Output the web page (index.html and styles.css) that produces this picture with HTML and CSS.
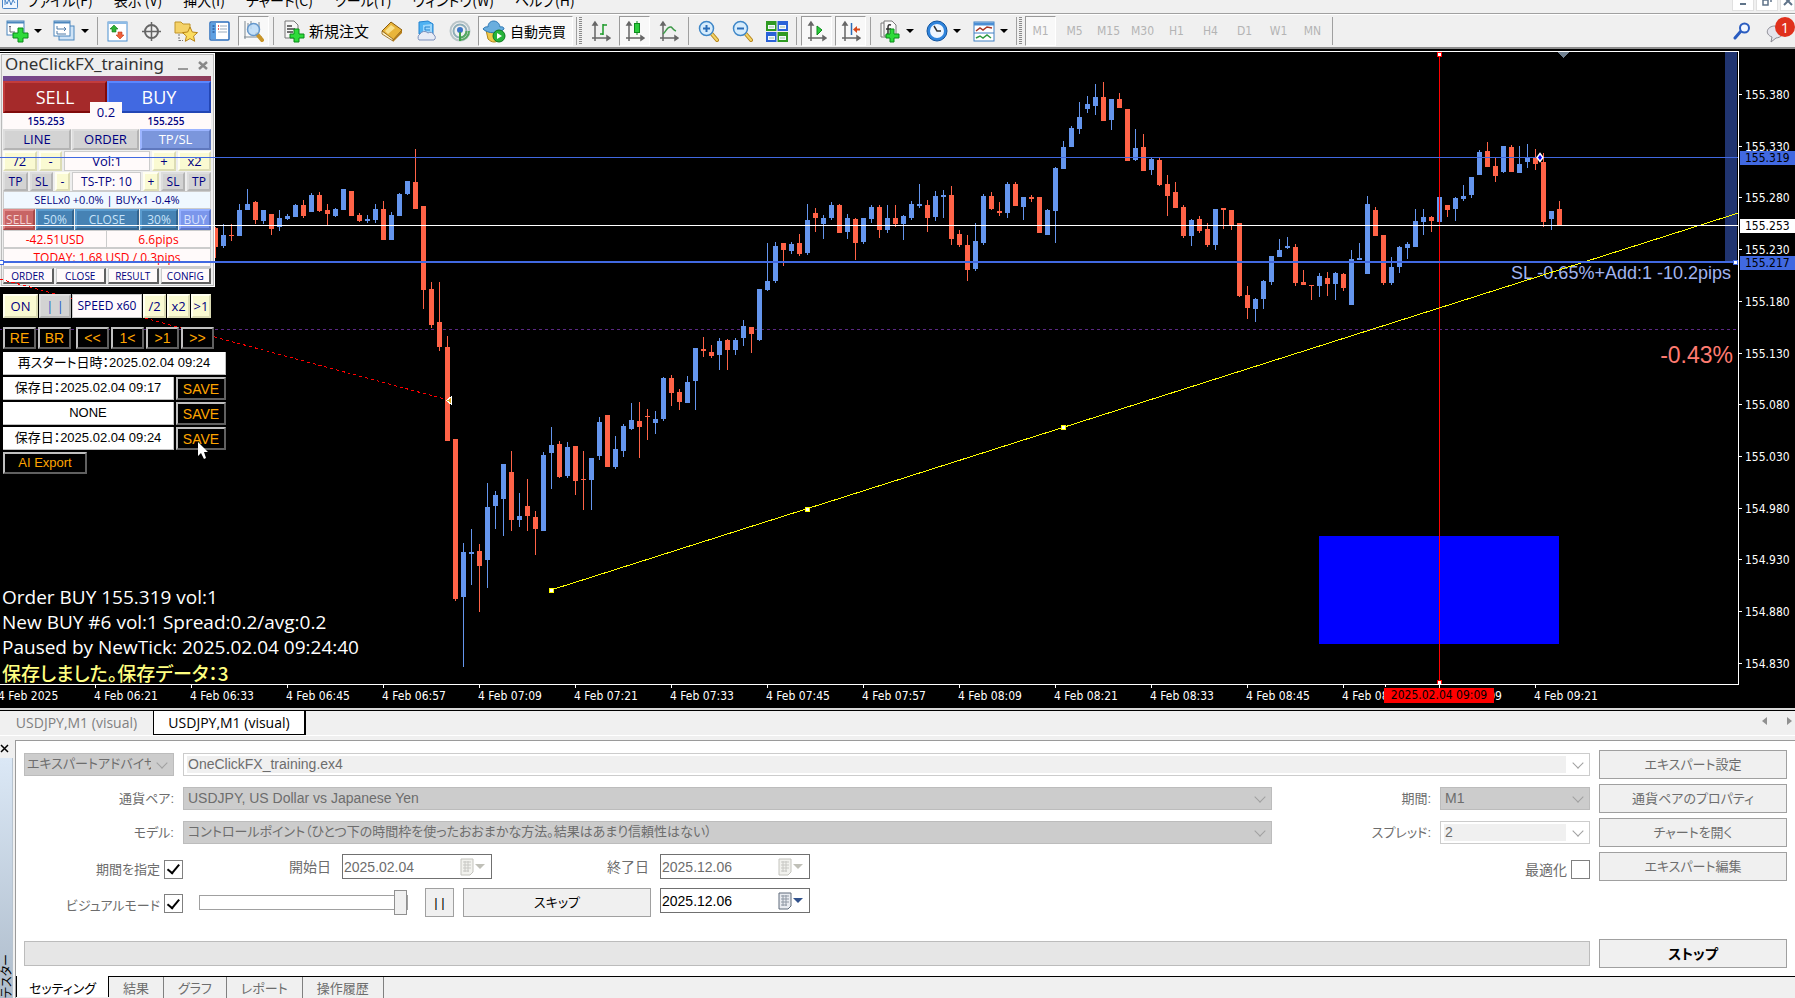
FILE: index.html
```html
<!DOCTYPE html>
<html lang="ja">
<head>
<meta charset="utf-8">
<title>USDJPY,M1 (visual)</title>
<link rel="stylesheet" href="styles.css">
</head>
<body>
<header class="menubar">
  <svg class="app-icon" width="16" height="16" viewBox="0 0 16 16"><rect x=".5" y=".5" width="15" height="15" rx="1" fill="#eef6ff" stroke="#4a86c8"/><path d="M3 12V7l2 4 2-5 2 6 2-5 2 3" fill="none" stroke="#4a86c8"/></svg>
  <nav class="menu">
    <button>ファイル(F)</button><button>表示 (V)</button><button>挿入(I)</button><button>チャート(C)</button><button>ツール(T)</button><button>ウィンドウ(W)</button><button>ヘルプ(H)</button>
  </nav>
  <div class="win-buttons">
    <button aria-label="最小化"><svg width="10" height="10" viewBox="0 0 10 10"><path d="M2 8h6" stroke="#5f7389" stroke-width="2"/></svg></button>
    <button aria-label="元に戻す"><svg width="10" height="10" viewBox="0 0 10 10"><path d="M1 4h5v5H1zM3 1h6v5" fill="none" stroke="#5f7389" stroke-width="1.5"/></svg></button>
    <button aria-label="閉じる"><svg width="10" height="10" viewBox="0 0 10 10"><path d="M1 1l8 8M9 1L1 9" stroke="#5f7389" stroke-width="2"/></svg></button>
  </div>
</header>

<div class="toolbar">
  <button class="tool drop" aria-label="新規チャート">
    <svg width="23" height="23" viewBox="0 0 23 23"><rect x="1" y="1" width="17" height="14" fill="#fff" stroke="#4b86bd"/><path d="M1 2.500h17" stroke="#4b86bd" stroke-width="2"/><path d="M4 6v6h5M4 6l-1 1M4 6l1 1" fill="none" stroke="#667"/><path d="M12 8h5v5h5v5h-5v4h-5v-4H7v-5h5z" fill="#2edb3a" stroke="#0a8a1a"/></svg><i class="caret"></i>
  </button>
  <button class="tool drop" aria-label="プロファイル">
    <svg width="23" height="23" viewBox="0 0 23 23"><rect x="6" y="6" width="15" height="14" fill="#cfe3f6" stroke="#4b86bd"/><rect x="1" y="1" width="16" height="15" fill="#fff" stroke="#4b86bd"/><path d="M1 2.500h16" stroke="#4b86bd" stroke-width="2"/><path d="M4 6v3h9M4 11v3h9M11 7l2 2-2 2" fill="none" stroke="#4f7ba6"/></svg><i class="caret"></i>
  </button>
  <span class="sep"></span>
  <button class="tool" aria-label="気配値表示"><svg width="21" height="21" viewBox="0 0 21 21"><rect x="1" y="1" width="19" height="19" fill="#fff" stroke="#4b8fd0"/><path d="M1 2h19" stroke="#8fbce6" stroke-width="2"/><path d="M7 4l4 4H9v3H5V8H3z" fill="#2eb135" stroke="#127a1a" stroke-width=".6"/><path d="M13 18l4-4h-2v-3h-4v3H9z" fill="#f0603a" stroke="#c03a18" stroke-width=".6"/></svg></button>
  <button class="tool" aria-label="データウィンドウ"><svg width="21" height="21" viewBox="0 0 21 21"><circle cx="10.500" cy="10.500" r="6.500" fill="none" stroke="#666" stroke-width="2"/><path d="M10.500 1v19M1 10.500h19" stroke="#666" stroke-width="1.500"/></svg></button>
  <button class="tool" aria-label="ナビゲーター"><svg width="24" height="22" viewBox="0 0 24 22"><path d="M1 2h6l2 2h7v9H1z" fill="#f5d268" stroke="#c09428"/><path d="M5 14v7M5 20.500h4" stroke="#777" stroke-dasharray="2 1"/><path d="M16 7l2.300 5 5.200.6-3.900 3.500 1.100 5.200-4.700-2.700-4.700 2.700 1.100-5.200-3.900-3.500 5.200-.6z" fill="#fbdc5e" stroke="#b98518"/></svg></button>
  <button class="tool" aria-label="ターミナル"><svg width="21" height="21" viewBox="0 0 21 21"><rect x="1" y="1" width="19" height="18" rx="1" fill="#fff" stroke="#2c6fbd" stroke-width="1.500"/><rect x="2" y="2" width="5" height="16" fill="#5ea0e2"/><path d="M3.500 5h2M3.500 8h2M3.500 11h2" stroke="#123a7a"/><path d="M9 5h1M9 8h1" stroke="#e02020" stroke-width="1.500"/><path d="M11 5h7M11 8h7M9 11h9" stroke="#9ab"/></svg></button>
  <button class="tool pressed" aria-label="ストラテジーテスター"><svg width="21" height="23" viewBox="0 0 21 23"><path d="M2 1v18M1 17h18M5 3v9M8 1v8M16 2v9" stroke="#7d8890" fill="none"/><path d="M14 14l5 6" stroke="#c99528" stroke-width="4" stroke-linecap="round"/><circle cx="10.500" cy="9.500" r="6" fill="#bcdcf8" fill-opacity=".85" stroke="#6698cc" stroke-width="1.500"/></svg></button>
  <span class="sep"></span>
  <button class="tool text order"><svg width="22" height="23" viewBox="0 0 22 23"><path d="M2 1h9l4 4v13H2z" fill="#f6f6f6" stroke="#777"/><path d="M4 6h5M4 9h8M4 12h6" stroke="#444" stroke-width="1.500"/><path d="M11 9h5v5h5v4h-5v4h-5v-4H7v-4h4z" fill="#2edb3a" stroke="#0a8a1a"/></svg>新規注文</button>
  <button class="tool" aria-label="MetaEditor"><svg width="22" height="21" viewBox="0 0 22 21"><path d="M1 10L10 1l11 8-9 10z" fill="#e9b53a" stroke="#8a5c0c"/><path d="M1 10v3l11 7v-2z" fill="#fff3c8" stroke="#8a5c0c" stroke-width=".8"/><path d="M4 10l6-6 4 3-7 6z" fill="#f9e08a"/><path d="M12 19v2l9-9V9z" fill="#b47c18"/></svg></button>
  <button class="tool" aria-label="VPS"><svg width="22" height="22" viewBox="0 0 22 22"><path d="M4 2l9-1 5 3v10H4z" fill="#4fb2f2" stroke="#2383d0"/><path d="M8 5l9-1v9H8z" fill="#9bd6fb"/><path d="M10 7h5M10 7v3h5" stroke="#2383d0" fill="none"/><path d="M4 20a4 4 0 0 1 1-6 5 5 0 0 1 8-1 4 4 0 0 1 6 2 3 3 0 0 1 0 5z" fill="#e8ecf6" stroke="#7c90bc"/></svg></button>
  <button class="tool" aria-label="シグナル"><svg width="22" height="22" viewBox="0 0 22 22"><g fill="none"><circle cx="11" cy="11" r="9.500" stroke="#b9c5c9" stroke-width="2"/><circle cx="11" cy="11" r="6.500" stroke="#8faeb8" stroke-width="2"/><path d="M11 20a9 9 0 0 0 9-9M11 17.500a6.500 6.500 0 0 0 6.500-6.500" stroke="#54a860" stroke-width="2"/></g><circle cx="11" cy="10" r="3" fill="#3c76c8"/><path d="M11 12v9" stroke="#3da04a" stroke-width="2"/></svg></button>
  <button class="tool text pressed auto"><svg width="24" height="23" viewBox="0 0 24 23"><path d="M4 10l2 9c4 4 8 4 12 0l2-9z" fill="#f0c94a" stroke="#b08518"/><path d="M1 9c2-3 5-2 5-2 0-8 11-8 12 0 0 0 4-1 4 2-5 5-16 5-21 0z" fill="#6aaede" stroke="#2a76b4"/><circle cx="17" cy="16" r="6" fill="#27b43a" stroke="#0d7a1e"/><path d="M15 13l5 3-5 3z" fill="#fff"/></svg>自動売買</button>
  <span class="edge"></span>
  <button class="tool" aria-label="バーチャート"><svg width="20" height="22" viewBox="0 0 20 22"><path class="ax" d="M4 21V3M1 18h18M4 2L2 5h4zM19 18l-3-2v4z"/><path d="M12 4v11M12 5h4M9 14h3" stroke="#1d9a2a" stroke-width="1.500" fill="none"/></svg></button>
  <button class="tool pressed" aria-label="ローソク足"><svg width="20" height="22" viewBox="0 0 20 22"><path class="ax" d="M4 21V3M1 18h18M4 2L2 5h4zM19 18l-3-2v4z"/><path d="M12 1v14" stroke="#118a1e"/><rect x="9.500" y="3.500" width="5" height="9" fill="#2bcc3c" stroke="#0c8a1c"/></svg></button>
  <button class="tool" aria-label="ラインチャート"><svg width="20" height="22" viewBox="0 0 20 22"><path class="ax" d="M4 21V3M1 18h18M4 2L2 5h4zM19 18l-3-2v4z"/><path d="M4 14c3-2 4-8 8-7 2 1 2 3 5 4" stroke="#3f9a4a" stroke-width="1.500" fill="none"/></svg></button>
  <span class="sep"></span>
  <button class="tool" aria-label="拡大"><svg width="21" height="22" viewBox="0 0 21 22"><path d="M13 13l6 7" stroke="#b8861c" stroke-width="4" stroke-linecap="round"/><path d="M13 13l6 7" stroke="#f3d468" stroke-width="2" stroke-linecap="round"/><circle cx="8.500" cy="8.500" r="7" fill="#d6ecfc" stroke="#3f87c8" stroke-width="1.500"/><path d="M5 8.500h7M8.500 5v7" stroke="#2a6db8" stroke-width="2"/></svg></button>
  <button class="tool" aria-label="縮小"><svg width="21" height="22" viewBox="0 0 21 22"><path d="M13 13l6 7" stroke="#b8861c" stroke-width="4" stroke-linecap="round"/><path d="M13 13l6 7" stroke="#f3d468" stroke-width="2" stroke-linecap="round"/><circle cx="8.500" cy="8.500" r="7" fill="#d6ecfc" stroke="#3f87c8" stroke-width="1.500"/><path d="M5 8.500h7" stroke="#2a6db8" stroke-width="2"/></svg></button>
  <button class="tool" aria-label="並べて表示"><svg width="22" height="21" viewBox="0 0 22 21"><path d="M0 0h10.500v10H0zM11.500 11H22v10H11.500z" fill="#2f9a22"/><path d="M11.500 0H22v10H11.500zM0 11h10.500v10H0z" fill="#2a62d8"/><path d="M2 4h7v4H2zM13 4h7v4h-7zM2 15h7v4H2zM13 15h7v4h-7z" fill="#f4f8ff"/><path d="M3 6h5M14 6h5M3 17h5M14 17h5" stroke="#9cc0a0"/></svg></button>
  <span class="sep"></span>
  <button class="tool pressed" aria-label="自動スクロール"><svg width="20" height="22" viewBox="0 0 20 22"><path class="ax" d="M4 21V3M1 18h18M4 2L2 5h4zM19 18l-3-2v4z"/><path d="M10 6l5 4-5 5z" fill="#2bcc3c" stroke="#0c8a1c"/></svg></button>
  <button class="tool pressed" aria-label="チャートシフト"><svg width="20" height="22" viewBox="0 0 20 22"><path class="ax" d="M4 21V3M1 18h18M4 2L2 5h4zM19 18l-3-2v4z"/><path d="M10.500 3v12" stroke="#2a6db8" stroke-width="1.500"/><path d="M12 9.500l4-3.500v2.500h3v2h-3V13z" fill="#d8481c"/></svg></button>
  <span class="sep"></span>
  <button class="tool drop" aria-label="インディケーター"><svg width="22" height="23" viewBox="0 0 22 23"><path d="M5 3H2v14h9M5 1h8l4 4v11H5z" fill="#fafafa" stroke="#777"/><path d="M12 5c-3-1-3 1-3 3v5c0 2-1 2-2 2M7 9h5" fill="none" stroke="#333" stroke-width="1.500"/><path d="M11 9h4v5h5v4h-5v4h-4v-4H7v-4h4z" fill="#2edb3a" stroke="#0a8a1a"/></svg><i class="caret"></i></button>
  <button class="tool drop" aria-label="時間足"><svg width="22" height="22" viewBox="0 0 22 22"><circle cx="11" cy="11" r="10" fill="#2f84dc" stroke="#11549f"/><circle cx="11" cy="11" r="7" fill="#eef6ff"/><path d="M8 6l3 5h4" fill="none" stroke="#333" stroke-width="1.500"/></svg><i class="caret"></i></button>
  <button class="tool drop" aria-label="定型チャート"><svg width="22" height="21" viewBox="0 0 22 21"><rect x="1" y="1" width="20" height="19" fill="#fff" stroke="#3f80c4"/><path d="M1 3h20" stroke="#4a8ed4" stroke-width="3"/><path d="M3 10l4-3 3 2 4-3 5 1" fill="none" stroke="#a83424" stroke-width="1.500"/><path d="M1 12h20" stroke="#3f80c4"/><path d="M3 17l4-2 3 2 4-3 4 3" fill="none" stroke="#2f9a3f" stroke-width="1.500"/></svg><i class="caret"></i></button>
  <span class="edge"></span>
  <button class="tool tf pressed" disabled>M1</button><button class="tool tf" disabled>M5</button><button class="tool tf" disabled>M15</button><button class="tool tf" disabled>M30</button><button class="tool tf" disabled>H1</button><button class="tool tf" disabled>H4</button><button class="tool tf" disabled>D1</button><button class="tool tf" disabled>W1</button><button class="tool tf" disabled>MN</button>
  <span class="sep"></span>
  <div class="tool-right">
    <button class="tool" aria-label="検索"><svg width="18" height="18" viewBox="0 0 18 18"><path d="M2 16l6-7" stroke="#2a5cc0" stroke-width="3" stroke-linecap="round"/><circle cx="11.500" cy="6" r="4.500" fill="#f0f6ff" stroke="#2a5cc0" stroke-width="2"/></svg></button>
    <button class="chat" aria-label="通知"><svg width="18" height="18" viewBox="0 0 18 18"><path d="M9 1c11 0 11 11 1 12l-5 4 1-5C-2 9 1 1 9 1z" fill="#e4e4ec" stroke="#8a8a92"/></svg><span class="badge">1</span></button>
  </div>
</div>

<main class="chart">
  <section class="plot">
    <svg class="layer" id="candles" aria-label="USDJPY M1"></svg>
    <div class="zone"></div>
    <div class="msgs"><p>Order BUY 155.319 vol:1</p><p>New BUY #6 vol:1 Spread:0.2/avg:0.2</p><p>Paused by NewTick: 2025.02.04 09:24:40</p><p class="saved">保存しました。保存データ：3</p></div>
    <p class="sl-text">SL -0.65%+Add:1 -10.2pips</p>
    <p class="pct">-0.43%</p>

    <div class="trade">
      <div class="trade-title"><span>OneClickFX_training</span><button aria-label="最小化"><svg width="12" height="12" viewBox="0 0 12 12"><path d="M1 10h10" stroke="#999" stroke-width="2"/></svg></button><button aria-label="閉じる"><svg width="12" height="12" viewBox="0 0 12 12"><path d="M2 3l8 7M10 3L2 10" stroke="#888" stroke-width="2.500"/></svg></button></div>
      <div class="stripe"></div>
      <div class="deal"><button class="b sell">SELL</button><button class="b buy">BUY</button><span class="spread">0.2</span></div>
      <div class="quotes"><span>155.253</span><span>155.255</span></div>
      <div class="r r-mode"><button class="b grey">LINE</button><button class="b grey">ORDER</button><button class="b on">TP/SL</button></div>
      <div class="r r-vol"><button class="b cream">/2</button><button class="b cream">-</button><output class="cell">Vol:1</output><button class="b cream">+</button><button class="b cream">x2</button></div>
      <div class="r r-ts"><button class="b grey">TP</button><button class="b grey">SL</button><button class="b cream">-</button><output class="cell">TS-TP: 10</output><button class="b cream">+</button><button class="b grey">SL</button><button class="b grey">TP</button></div>
      <div class="info alice">SELLx0 +0.0% | BUYx1 -0.4%</div>
      <div class="r r-close"><button class="b lsell">SELL</button><button class="b steel">50%</button><button class="b steel">CLOSE</button><button class="b steel">30%</button><button class="b lbuy">BUY</button></div>
      <div class="money"><span>-42.51USD</span><span>6.6pips</span></div>
      <div class="info today">TODAY: 1.68 USD / 0.3pips</div>
      <div class="r r-tabs"><button class="b snow">ORDER</button><button class="b snow">CLOSE</button><button class="b snow">RESULT</button><button class="b snow">CONFIG</button></div>
    </div>

    <div class="control">
      <div class="r r-speed"><button class="b cream">ON</button><button class="b grey pz">| |</button><output class="cell">SPEED x60</output><button class="b cream">/2</button><button class="b cream">x2</button><button class="b cream">&gt;1</button></div>
      <div class="r r-step"><button class="k">RE</button><button class="k">BR</button><button class="k k-gap">&lt;&lt;</button><button class="k">1&lt;</button><button class="k">&gt;1</button><button class="k">&gt;&gt;</button></div>
      <div class="slots">
        <span class="slot wide">再スタート日時：2025.02.04 09:24</span>
        <span class="slot">保存日：2025.02.04 09:17</span><button class="k">SAVE</button>
        <span class="slot">NONE</span><button class="k">SAVE</button>
        <span class="slot">保存日：2025.02.04 09:24</span><button class="k">SAVE</button>
      </div>
      <button class="k export">AI Export</button>
    </div>
    <svg class="layer front" id="lines"></svg>
  </section>
  <aside class="prices" id="prices"></aside>
  <footer class="times" id="times"></footer>
</main>

<nav class="chart-tabs">
  <button>USDJPY,M1 (visual)</button><button class="active">USDJPY,M1 (visual)</button>
  <span class="arrows"><i class="al"></i><i class="ar"></i></span>
</nav>

<section class="tester">
  <div class="rail"><button class="rail-close" aria-label="閉じる"><svg width="9" height="9" viewBox="0 0 9 9"><path d="M1 1l7 7M8 1L1 8" stroke="#000" stroke-width="1.500"/></svg></button><div class="rail-body"><span>テスター</span></div></div>
  <div class="pane">
    <form class="form">
      <div class="line">
        <span class="pick filled w-type"><select class="jp" disabled aria-label="種類"><option>エキスパートアドバイザ</option></select></span>
        <span class="pick open grow"><select disabled aria-label="エキスパート"><option>OneClickFX_training.ex4</option></select></span>
      </div>
      <button class="btn" type="button" disabled>エキスパート設定</button>
      <div class="line">
        <label class="lab" for="sym">通貨ペア:</label><span class="pick filled grow"><select id="sym" disabled><option>USDJPY, US Dollar vs Japanese Yen</option></select></span>
        <label class="lab rt" for="per">期間:</label><span class="pick filled w-small"><select id="per" disabled><option>M1</option></select></span>
      </div>
      <button class="btn" type="button" disabled>通貨ペアのプロパティ</button>
      <div class="line">
        <label class="lab" for="mod">モデル:</label><span class="pick filled grow"><select class="jp" id="mod" disabled><option>コントロールポイント（ひとつ下の時間枠を使ったおおまかな方法。結果はあまり信頼性はない）</option></select></span>
        <label class="lab rt" for="spr">スプレッド:</label><span class="pick open w-small"><select id="spr" disabled><option>2</option></select></span>
      </div>
      <button class="btn" type="button" disabled>チャートを開く</button>
      <div class="line">
        <label class="chk-lab" for="use">期間を指定</label><input class="chk" type="checkbox" id="use" checked>
        <label class="d-lab first" for="from">開始日</label><span class="date off"><input id="from" value="2025.02.04" disabled><svg width="26" height="18" viewBox="0 0 26 18"><path d="M2 1h12v13l-3 3H2z" fill="#f2f2ee" stroke="#c4c4be"/><path d="M4 4h8M4 7h8M4 10h8M4 13h6M6 3v11M9 3v11" stroke="#c8c8c4"/><path d="M16 6h10l-5 5z" fill="#c0c0b8"/></svg></span>
        <label class="d-lab" for="to">終了日</label><span class="date off"><input id="to" value="2025.12.06" disabled><svg width="26" height="18" viewBox="0 0 26 18"><path d="M2 1h12v13l-3 3H2z" fill="#f2f2ee" stroke="#c4c4be"/><path d="M4 4h8M4 7h8M4 10h8M4 13h6M6 3v11M9 3v11" stroke="#c8c8c4"/><path d="M16 6h10l-5 5z" fill="#c0c0b8"/></svg></span>
        <span class="opt"><label for="opt">最適化</label><input class="chk" type="checkbox" id="opt"></span>
      </div>
      <button class="btn" type="button" disabled>エキスパート編集</button>
      <div class="line visual">
        <label class="chk-lab" for="vis">ビジュアルモード</label><input class="chk" type="checkbox" id="vis" checked>
        <input class="speed" type="range" min="0" max="100" value="100" aria-label="速度">
        <button class="btn live pause" type="button">| |</button><button class="btn live skip" type="button">スキップ</button>
        <span class="date"><input value="2025.12.06" aria-label="スキップ先"><svg width="26" height="18" viewBox="0 0 26 18"><path d="M2 1h12v13l-3 3H2z" fill="#e8ebf0" stroke="#5f6a7a"/><path d="M4 4h8M4 7h8M4 10h8M4 13h6M6 3v11M9 3v11" stroke="#8f98a4"/><path d="M16 6h10l-5 5z" fill="#31528c"/></svg></span>
      </div>
      <span></span>
      <div class="progress" role="progressbar" aria-label="進捗"></div>
      <button class="btn live stop" type="button">ストップ</button>
    </form>
    <nav class="pane-tabs"><button class="active">セッティング</button><button>結果</button><button>グラフ</button><button>レポート</button><button>操作履歴</button></nav>
  </div>
</section>
<script src="chart.js"></script>
</body>
</html>
```

FILE: styles.css
```css
:root {
  --ui: "Open Sans", "Noto Sans", "Noto Sans CJK JP", sans-serif;
  --axis: "DejaVu Sans Condensed", "Noto Sans", sans-serif;
  --gothic: "Liberation Sans", "Noto Sans CJK JP", sans-serif;
  --face: #f0f0f0;
}
* { box-sizing: border-box; }
body { margin: 0; min-height: 100vh; display: flex; flex-direction: column; overflow: hidden; background: var(--face); font: 14px/20px var(--ui); color: #000; }
button { font: inherit; color: inherit; border: 0; padding: 0; background: none; white-space: nowrap; }
p { margin: 0; }

/* menu */
.menubar { display: flex; align-items: flex-end; height: 14px; border-bottom: 1px solid #a0a0a0; overflow: hidden; }
.app-icon { margin: 0 9px 4px 2px; }
.menu { display: flex; gap: 21px; padding-bottom: 3px; font: 14px/20px "Noto Sans CJK JP", sans-serif; font-feature-settings: "palt"; }
.menu button { height: 20px; }
.win-buttons { display: flex; gap: 2px; margin-left: auto; height: 24px; overflow: hidden; margin-bottom: 2px; }
.win-buttons button { width: 22px; background: #fff; border: 1px solid #e0e0e0; display: grid; place-items: end center; padding-bottom: 4px; }
.win-buttons button:last-child { width: 15px; }

/* toolbar */
.toolbar { display: flex; align-items: center; gap: 3px; height: 35px; padding: 1px 0 1px 2px; border-top: 1px solid #fff; border-bottom: 2px solid #8c8c8c; overflow: hidden; }
.tool { flex: none; width: 31px; height: 30px; display: grid; place-items: center; }
.tool svg { display: block; }
.tool.drop { width: 44px; display: flex; align-items: center; gap: 5px; padding-left: 4px; }
.caret { border: 4px solid transparent; border-top-color: #000; border-bottom: 0; }
.sep { flex: none; width: 1px; height: 28px; margin: 0 1px; background: #a0a0a0; }
.edge { flex: none; width: 6px; height: 28px; border-left: 1px solid #a0a0a0; background: repeating-linear-gradient(#8a8a8a 0 1px, transparent 1px 2px) right / 3px 100% no-repeat; }
.pressed { background: #f8f8f8; border: 1px solid #fff; border-top-color: #9a9a9a; border-left-color: #9a9a9a; }
.tool.text { display: flex; align-items: center; width: 95px; padding-left: 5px; gap: 4px; font: 15px/22px "Noto Sans CJK JP", sans-serif; }
.tool.auto { padding-left: 3px; gap: 4px; font-size: 14px; }
.tool.tf { font: 12px/16px var(--axis); color: #b4b4b4; }
.ax { fill: #666; stroke: #666; stroke-width: 1.500; }
.tool-right { margin-left: auto; display: flex; align-items: center; gap: 8px; }
.chat { width: 30px; height: 30px; position: relative; display: grid; place-items: end start; padding: 0 0 3px 1px; }
.badge { position: absolute; right: 0; top: 1px; width: 20px; height: 20px; border-radius: 10px; background: #e0301c; color: #fff; font: 15px/20px var(--ui); text-align: center; }

/* chart */
.chart { display: grid; grid-template-columns: minmax(0, 1fr) 56px; background: #000; padding-top: 2px; color: #fff; font: 12px/14px var(--axis); border-bottom: 2px solid #d8d8d8; overflow: hidden; }
.plot { position: relative; height: 634px; border: solid #fff; border-width: 1px 1px 1px 0; overflow: hidden; }
.layer { position: absolute; left: 0; top: 0; width: 100%; height: 100%; shape-rendering: crispEdges; }
.front { pointer-events: none; }
.smooth { shape-rendering: auto; }
.zone { position: absolute; right: 1px; top: 0; width: 12px; height: 210px; background: #203470; }
.prices { position: relative; overflow: hidden; }
.prices span { position: absolute; left: 0; width: 100%; padding-left: 6px; height: 14px; }
.prices span::before { content: ""; position: absolute; left: 0; top: 6px; width: 3px; height: 1px; background: #fff; }
.prices .tag { left: 1px; padding-left: 5px; color: #000; background: #4169e1; line-height: 15px; }
.prices .tag::before { display: none; }
.prices .tag.bid { background: #fff; }
.times { position: relative; height: 23px; grid-column: 1 / -1; overflow: hidden; }
.times span { position: absolute; top: 4px; white-space: nowrap; }
.times span::before { content: ""; position: absolute; left: 1px; top: -4px; width: 1px; height: 3px; background: #fff; }
.times .tag { background: #f00; color: #000; width: 110px; text-align: center; line-height: 15px; top: 3px; }
.msgs { position: absolute; left: 2px; bottom: -1px; font: 19px/25px var(--ui); white-space: nowrap; }
.msgs .saved { color: #ffff80; font: 500 19px/25px "Noto Sans CJK JP", sans-serif; font-feature-settings: "palt"; }
.sl-text { position: absolute; right: 7px; top: 210px; font: 18px/22px var(--gothic); color: #a0b4f0; }
.pct { position: absolute; right: 5px; top: 289px; font: 23px/28px var(--gothic); color: #ff7b70; }

/* trade panel */
.trade { position: absolute; left: 0; top: 1px; width: 215px; padding: 0 3px 2px; background: #eee; border: solid #fff; border-width: 1px 1px 1px 0; outline: 1px solid #bbb; outline-offset: -2px; color: #000080; font: 13px/16px var(--ui); }
.trade-title { display: flex; align-items: center; height: 22px; padding: 0 2px; color: #333; font: 17px/20px "Noto Sans", var(--ui); gap: 8px; }
.trade-title span { flex: 1; height: 22px; }
.trade-title button { height: 12px; line-height: 0; }
.stripe { height: 5px; background: linear-gradient(90deg, #6e4690, #96466e 60%, #8c3c5a); }
.b { height: 100%; text-align: center; overflow: hidden; border: 2px solid; padding: 0; line-height: 1; display: grid; place-items: center; }
.deal { position: relative; display: grid; grid-template-columns: 1fr 1fr; height: 32px; font-size: 18px; color: #fff; }
.sell { background: #a52a2a; border-color: #c33c3c #800a0a #800a0a #c33c3c; }
.buy { background: #4169e1; border-color: #5a86ff #2346b4 #2346b4 #5a86ff; }
.spread { position: absolute; left: 50%; top: 21px; width: 32px; height: 26px; margin-left: -17px; background: #fffafa; color: #000080; font-size: 13px; line-height: 20px; text-align: center; }
.quotes { display: grid; grid-template-columns: 1fr 1fr; height: 16px; background: #fffafa; font: 600 10px/16px var(--ui); text-align: center; }
.quotes span:first-child { padding-right: 18px; }
.quotes span:last-child { padding-left: 14px; }
.r { display: grid; column-gap: 2px; }
.r-mode { grid-template-columns: 68px 67px 1fr; height: 21px; column-gap: 1px; }
.r-vol { grid-template-columns: 34px 23px 1fr 24px 33px; height: 20px; margin-top: 1px; }
.r-ts { grid-template-columns: 25px 23px 15px 1fr 16px 24px 24px; height: 19px; margin-top: 1px; font-size: 12px; }
.grey { background: #d3d3d3; border-color: #ddd #b4b4b4 #b4b4b4 #ddd; }
.on { background: #7b96dc; color: #fff; border-color: #9bb4ff #5f78be #5f78be #9bb4ff; }
.cream { background: #fafad2; border-color: #fffff0 #dcdcb4 #dcdcb4 #fffff0; }
.cell { background: #fffafa; border: 1px solid #ccc; display: grid; place-items: center; line-height: 1; white-space: nowrap; overflow: hidden; }
.info { height: 18px; line-height: 16px; text-align: center; background: #fffafa; border: 1px solid #ccc; white-space: nowrap; }
.alice { background: #f0f8ff; font-size: 11px; }
.r-close { grid-template-columns: 32px 38px 1fr 38px 32px; height: 21px; column-gap: 1px; }
.lsell { background: #c86464; color: #f4d0d0; border-color: #e08c8c #a84a4a #a84a4a #e08c8c; font-size: 12px; }
.steel { background: #4682b4; color: #c8e4fa; border-color: #5a9ccf #33648e #33648e #5a9ccf; font-size: 12px; }
.lbuy { background: #7b96eb; color: #d8e2ff; border-color: #94b0ff #5c76c8 #5c76c8 #94b0ff; font-size: 12px; }
.money { display: grid; grid-template-columns: 1fr 1fr; height: 18px; font-size: 12px; line-height: 17px; text-align: center; color: #f00; background: #fffafa; border: 1px solid #ccc; }
.money span:first-child { border-right: 1px solid #ccc; }
.today { color: #f00; font-size: 12px; height: 20px; line-height: 18px; border-bottom-width: 2px; }
.r-tabs { grid-template-columns: repeat(4, 1fr); height: 16px; font-size: 10px; }
.snow { background: #fffafa; border-width: 1px 2px 2px 1px; border-color: #ccc #606060 #606060 #ccc; }

/* replay controls */
.control { position: absolute; left: 3px; top: 242px; width: 224px; color: #000080; font: 12px/16px var(--ui); }
.r-speed { grid-template-columns: 35px 32px 70px 23px 23px 20px; height: 24px; column-gap: 1px; width: 208px; font-size: 13px; }
.r-speed .cell { font-size: 12px; }
.pz { color: #1e5ac8; }
.r-step { display: flex; gap: 2px; margin-top: 9px; height: 22px; }
.k { background: #000; color: #ffa500; border: 2px solid; border-color: #c0c0c0 #606060 #606060 #c0c0c0; font: 14px/16px var(--gothic); }
.r-step .k { width: 33px; }
.k-gap { margin-left: 3px; }
.slots { display: grid; grid-template-columns: 171px 50px; gap: 2px; grid-auto-rows: 23px; margin-top: 3px; }
.slot { background: #fff; color: #000; border: solid #c0c0c0; border-width: 0 1px 1px 0; text-align: center; font: 13px/22px var(--gothic); font-feature-settings: "palt"; white-space: nowrap; }
.wide { grid-column: 1 / -1; }
.export { display: block; width: 84px; height: 22px; margin-top: 2px; font-size: 13px; }

/* chart tabs */
.chart-tabs { display: flex; height: 26px; border-top: 1px solid #000; border-bottom: 1px solid #fff; font: 14px/24px var(--ui); color: #808080; }
.chart-tabs button { width: 153px; height: 24px; }
.chart-tabs .active { color: #000; background: #fff; border: solid #000; border-width: 0 2px 1px 1px; }
.arrows { margin-left: auto; display: flex; gap: 20px; padding: 6px 3px 0 0; }
.arrows i { height: 8px; border: solid transparent; border-width: 4px 0; }
.arrows .al { border-right: 5px solid #909090; }
.arrows .ar { border-left: 5px solid #909090; }

/* tester */
.tester { flex: 1; display: grid; grid-template-columns: 15px minmax(0, 1fr); }
.rail { display: flex; flex-direction: column; width: 13px; }
.rail-close { height: 22px; padding-top: 2px; display: flex; align-items: center; }
.rail-body { flex: 1; display: flex; flex-direction: column; justify-content: flex-end; background: linear-gradient(#dbe8f6, #aebccb); border-right: 1px solid #b8c4d0; overflow: hidden; }
.rail-body span { writing-mode: vertical-rl; text-orientation: sideways; transform: rotate(180deg); font: 12px/12px "Noto Sans CJK JP", sans-serif; font-feature-settings: "palt"; }
.pane { display: flex; flex-direction: column; margin-top: 4px; background: #fff; border: solid #9a9a9a; border-width: 1px 0 0 1px; }
.form { display: grid; grid-template-columns: minmax(0, 1fr) 188px; column-gap: 9px; row-gap: 5px; align-items: center; padding: 9px 8px 8px 8px; font: 14px/20px var(--gothic); font-feature-settings: "palt"; color: #6d6d6d; }
.line { display: flex; align-items: center; height: 29px; min-width: 0; }
.pick { position: relative; display: block; height: 23px; min-width: 0; border: 1px solid #bcbcbc; }
.pick::after { content: ""; position: absolute; right: 7px; top: 5px; width: 7px; height: 7px; border: solid #a0a0a0; border-width: 0 1px 1px 0; transform: rotate(45deg); }
.pick select { appearance: none; display: block; width: 100%; height: 21px; border: 0; padding: 0 24px 2px 4px; font: inherit; font-feature-settings: inherit; color: #6d6d6d; background: none; opacity: 1; }
.pick .jp { font-size: 13px; }
.filled { background: #ccc; }
.open { background: #fff; border-color: #ccc; }
.open select { background: linear-gradient(#f0f0f0, #f0f0f0) 3px 2px / calc(100% - 26px) 17px no-repeat; }
.w-type { width: 150px; margin-right: 9px; }
.w-type select { text-overflow: clip; padding-left: 2px; padding-right: 22px; }
.grow { flex: 1; }
.w-small { width: 150px; }
.lab { width: 150px; margin-right: 9px; text-align: right; font-size: 13px; }
.lab.rt { width: 159px; }
.chk-lab { width: 136px; text-align: right; margin-right: 4px; padding-top: 6px; font-size: 13px; }
.chk { appearance: none; flex: none; width: 19px; height: 19px; margin: 5px 0 0; border: 1px solid #808080; background: #fff; display: grid; place-items: center; }
.chk:checked::before { content: ""; width: 5px; height: 10px; border: solid #000; border-width: 0 2px 2px 0; transform: rotate(40deg) translate(-1px, -1px); }
.d-lab { width: 157px; text-align: right; margin-right: 11px; }
.d-lab.first { width: 148px; }
.date { display: flex; align-items: center; width: 150px; height: 25px; border: 1px solid #707070; background: #fff; padding-right: 6px; color: #000; }
.date input { flex: 1; min-width: 0; border: 0; padding: 0 1px; font: inherit; color: inherit; background: none; }
.date.off { color: #6d6d6d; }
.opt { margin-left: auto; display: flex; align-items: center; gap: 4px; }
.opt label { padding-top: 6px; }
.visual { margin-top: 2px; }
.visual .chk { margin-top: 2px; }
.visual .date { align-self: flex-start; }
.speed { appearance: none; width: 209px; height: 25px; margin: 0 17px 0 16px; background: none; }
.speed::-webkit-slider-runnable-track { height: 15px; border: 1px solid #a0a0a0; background: #fff; }
.speed::-webkit-slider-thumb { appearance: none; width: 13px; height: 25px; margin-top: -6px; border: 1px solid #909090; background: #f0f0f0; }
.btn { height: 29px; border: 1px solid #a0a0a0; background: var(--face); color: #6d6d6d; font-size: 13px; }
.btn.live { color: #000; }
.pause { width: 29px; margin-right: 9px; }
.skip { width: 188px; margin-right: 9px; }
.progress { height: 25px; margin: 17px 0 0; border: 1px solid #bcbcbc; background: #e6e6e6; }
.btn.stop { margin-top: 17px; font-weight: 700; font-size: 14px; }
.pane-tabs { display: flex; flex: 1; min-height: 20px; border-top: 1px solid #000; background: var(--face); font: 13px/22px "Noto Sans CJK JP", sans-serif; font-feature-settings: "palt"; color: #6d6d6d; }
.pane-tabs button { height: 21px; padding: 0 14px; line-height: 22px; }
.pane-tabs button:not(.active) { border-right: 1px solid #808080; }
.pane-tabs .active { background: #fff; color: #000; padding: 1px 12px 0; margin-top: -1px; border: solid #000; border-width: 0 1px; }
```

FILE: chart.js
```js
// One entry per minute: direction, high, body top, body bottom, low (window y).
const bars = `
d 227 228 247 258,u 224 235 246 248,d 224 235 236 241,u 204 210 236 236,u 189 204 210 210,d 201 202 220 224,u 210 210 221 224,d 214 214 229 235,
u 210 218 227 231,u 214 216 219 220,u 204 205 217 217,d 200 205 216 218,u 193 195 212 212,d 192 195 211 212,d 204 210 214 225,u 208 209 216 217,
u 189 189 210 210,d 191 191 216 216,d 213 215 221 222,u 215 219 221 223,u 204 209 220 223,d 201 209 240 240,u 212 215 240 240,u 193 194 216 216,
u 181 181 194 195,d 149 182 209 209,d 206 206 290 309,d 282 289 325 328,d 282 322 347 351,d 336 347 441 441,d 439 439 599 601,u 543 552 597 667,
u 529 552 554 585,d 544 551 566 612,u 483 507 560 588,u 491 495 506 529,u 464 464 499 536,d 451 472 520 531,u 493 516 520 527,d 479 506 516 531,
d 511 517 529 555,u 452 455 531 531,u 427 445 453 489,d 441 444 477 478,u 442 447 476 478,d 446 446 481 495,d 451 479 480 510,u 458 458 480 510,
u 417 422 456 460,d 415 415 467 467,u 436 449 467 469,u 424 426 451 457,u 403 420 429 430,d 402 421 427 458,d 409 416 417 440,u 411 419 423 434,
u 377 378 419 421,d 375 378 393 406,d 389 392 402 410,u 376 382 403 403,u 348 348 381 410,d 337 349 351 357,d 345 352 356 358,u 338 341 355 370,
d 339 340 350 370,u 338 340 350 355,u 320 326 338 346,d 327 327 334 353,u 289 289 340 341,u 243 281 290 291,u 242 246 281 283,d 243 243 250 266,
u 242 244 251 254,d 234 243 254 256,u 204 220 253 255,d 208 213 218 232,u 215 218 224 239,u 202 205 218 220,d 204 205 233 233,u 214 218 232 239,
d 218 219 243 260,u 218 218 242 244,u 205 207 219 223,d 205 207 230 238,u 205 218 230 233,d 205 218 224 227,u 215 216 224 240,u 201 204 218 220,
u 184 204 206 208,d 200 205 218 232,u 191 196 217 221,u 190 195 197 218,d 186 195 239 245,d 230 234 245 247,d 235 245 270 281,u 223 241 269 271,
u 194 196 243 245,d 192 196 209 210,d 202 211 213 216,u 182 184 213 218,d 182 184 206 206,u 197 197 207 220,d 195 197 199 202,d 197 197 233 233,
u 209 210 235 235,u 167 168 211 243,u 141 147 169 169,u 126 128 147 147,u 102 117 129 134,u 96 104 109 113,u 84 97 106 115,d 82 97 121 121,
u 99 99 120 130,d 93 99 108 108,d 109 109 161 161,u 129 148 160 161,d 134 147 171 171,u 158 159 170 175,d 158 160 185 186,d 175 184 196 216,
d 182 192 208 208,d 205 207 236 238,u 219 220 236 246,d 216 219 231 233,d 223 229 245 247,u 209 209 245 250,d 208 208 210 229,d 210 210 226 230,
d 223 223 296 297,d 286 295 308 319,u 298 299 309 322,u 280 281 299 309,u 256 256 282 285,u 239 250 257 257,u 237 246 248 249,d 244 247 283 286,
d 270 282 285 285,d 285 285 286 300,u 273 276 286 297,d 272 278 284 296,u 272 273 284 300,d 273 274 288 291,u 250 259 305 305,u 243 258 260 260,
u 196 204 274 274,d 207 210 236 236,d 235 235 283 285,u 257 267 283 285,u 246 247 267 273,u 242 244 248 259,u 209 221 247 247,u 209 217 222 235,
d 216 217 221 232,u 197 197 222 222,d 205 205 210 217,u 197 198 209 221,u 185 196 199 201,u 177 177 195 198,u 150 152 175 175,d 142 151 167 167,
d 158 166 176 182,u 146 146 172 173,d 145 147 172 172,u 146 164 173 173,u 144 157 162 168,d 149 158 164 170,d 153 162 222 227,u 211 211 219 230,
d 201 209 225 225`;

const TOP = 52;
const X0 = 215;
const STEP = 8;
const color = { u: '#6495ed', d: '#ff6347' };

const rect = (x, y, w, h, fill) => `<rect x="${x}" y="${y - TOP}" width="${w}" height="${h}" fill="${fill}"/>`;
const handle = (x, y, edge) => rect(x - 2, y - 2, 5, 5, edge) + rect(x - 1, y - 1, 3, 3, '#fff');
const hline = (y, h, fill) => rect(0, y, '100%', h, fill);
const redLine = (x) => `<line x1="0" y1="${279 - TOP}" x2="${x}" y2="${279 + x * 0.27 - TOP}" stroke="#f00" stroke-dasharray="3 3"/>`;

let back = `<line x1="-1" y1="277.5" x2="100%" y2="277.5" stroke="#5a2882" stroke-dasharray="3 3"/>`;
bars.trim().split(',').forEach((bar, i) => {
  const [dir, high, top, bottom, low] = bar.trim().split(' ').map((v, n) => (n ? +v : v));
  const x = X0 + i * STEP;
  back += rect(x, high, 1, low - high, color[dir]) + rect(x - 2, top, 5, bottom - top, color[dir]);
});
back += redLine(446);
back += rect(1319, 536, 240, 108, '#00f');
back += `<path d="M1557 0h12l-6 6z" fill="#708090"/>`;
document.getElementById('candles').innerHTML = back;

let front = rect(1439, 52, 1, 632, '#f00');
front += `<line x1="551" y1="538" x2="1751" y2="157" stroke="#ff0"/>`;
front += hline(157, 1, '#4169e1') + hline(225, 1, '#fff') + hline(261, 2, '#4169e1');
front += redLine(50);
front += handle(551, 590, '#ff0') + handle(807, 509, '#ff0') + handle(1063, 427, '#ff0');
front += handle(1439, 54, '#f00') + handle(1439, 682, '#f00');
front += handle(1, 262, '#4169e1') + handle(1735, 262, '#4169e1');
front += `<path d="M451.500 344.500v8l-5-4z" fill="#daa520" stroke="#fff"/>`;
front += `<path class="smooth" d="M1540 101.500l3 4-3 4-3-4z" fill="#00f" stroke="#fff" stroke-width="1.500"/>`;
front += `<path class="smooth" d="M198 390v14l3-3 3 6 2-1-2-6h4z" fill="#fff"/>`;
document.getElementById('lines').innerHTML = front;

const prices = [];
for (let k = 0; k < 12; k++) {
  const y = Math.round(94 + k * 51.7) - 57;
  prices.push(`<span style="top:${y}px">${(155.38 - k * 0.05).toFixed(3)}</span>`);
}
[['155.319', 151, ''], ['155.253', 219, 'bid'], ['155.217', 256, '']].forEach(([text, y, kind]) => {
  prices.push(`<span class="tag ${kind}" style="top:${y - 51}px">${text}</span>`);
});
document.getElementById('prices').innerHTML = prices.join('');

let times = '<span style="left:-2px">4 Feb 2025</span>';
for (let k = 0; k < 16; k++) {
  const min = 6 * 60 + 21 + k * 12;
  const clock = `0${Math.floor(min / 60)}:${String(min % 60).padStart(2, '0')}`;
  times += `<span style="left:${94 + k * 96}px">4 Feb ${clock}</span>`;
}
times += '<span class="tag" style="left:1384px">2025.02.04 09:09</span>';
document.getElementById('times').innerHTML = times;
```
